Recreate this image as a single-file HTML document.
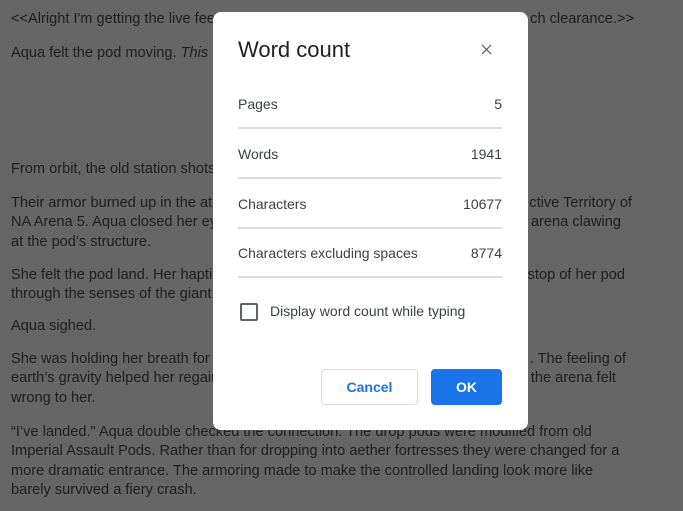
<!DOCTYPE html>
<html><head><style>
body{margin:0;width:683px;height:511px;background:#666;overflow:hidden;position:relative;font-family:"Liberation Sans",Arial,sans-serif;}
.t{position:absolute;left:11px;font-size:14.6px;color:#1f1f1f;white-space:nowrap;line-height:19.4px}
.r{position:absolute;font-size:14.6px;color:#1f1f1f;white-space:nowrap;line-height:19.4px;text-align:right}
.d{position:absolute;left:213px;top:12px;width:315px;height:418px;background:#fff;border-radius:8px;}
.d *{position:absolute;}
.title{left:25px;top:25px;font-size:22px;color:#202124;}
.lab{left:25px;font-size:14px;color:#3c4043}
.val{left:189px;width:100px;font-size:14px;color:#3c4043;text-align:right}
.ln{left:25px;width:264px;height:2px;background:#dadce0}
</style></head><body>
<div class="t" style="top:10px">&lt;&lt;Alright I'm getting the live feed from the arena now.</div>
<div class="t" style="top:44px">Aqua felt the pod moving. <i>This</i></div>
<div class="t" style="top:160px">From orbit, the old station shots</div>
<div class="t" style="top:194px">Their armor burned up in the atmosphere<br>NA Arena 5. Aqua closed her eyes and<br>at the pod’s structure.</div>
<div class="t" style="top:266px">She felt the pod land. Her haptic feedback<br>through the senses of the giant</div>
<div class="t" style="top:317px">Aqua sighed.</div>
<div class="t" style="top:350px">She was holding her breath for the entire<br>earth’s gravity helped her regain her<br>wrong to her.</div>
<div class="r" style="top:10px;right:49px">ch clearance.&gt;&gt;</div>
<div class="r" style="top:194px;right:51px">ctive Territory of</div>
<div class="r" style="top:213px;right:62px">arena clawing</div>
<div class="r" style="top:266px;right:58px">stop of her pod</div>
<div class="r" style="top:350px;right:57px">. The feeling of</div>
<div class="r" style="top:369px;right:67px">the arena felt</div>
<div class="t" style="top:423px">“I’ve landed." Aqua double checked the connection. The drop pods were modified from old<br>Imperial Assault Pods. Rather than for dropping into aether fortresses they were changed for a<br>more dramatic entrance. The armoring made to make the controlled landing look more like<br>barely survived a fiery crash.</div>
<div class="d">
<div class="title">Word count</div>
<svg style="left:268px;top:32px" width="11" height="11" viewBox="0 0 12 12"><path d="M1 1L11 11M11 1L1 11" stroke="#5f6368" stroke-width="1.4"/></svg>
<div class="lab" style="top:84px">Pages</div><div class="val" style="top:84px">5</div>
<div class="ln" style="top:115px"></div>
<div class="lab" style="top:134px">Words</div><div class="val" style="top:134px">1941</div>
<div class="ln" style="top:165px"></div>
<div class="lab" style="top:184px">Characters</div><div class="val" style="top:184px">10677</div>
<div class="ln" style="top:215px"></div>
<div class="lab" style="top:233px">Characters excluding spaces</div><div class="val" style="top:233px">8774</div>
<div class="ln" style="top:264px"></div>
<div style="left:27px;top:291px;width:14px;height:14px;border:2px solid #5f6368;border-radius:2px"></div>
<div class="lab" style="left:57px;top:291px">Display word count while typing</div>
<div style="left:108px;top:357px;width:95px;height:34px;border:1px solid #dadce0;border-radius:4px;color:#1a73e8;font-size:14px;text-align:center;line-height:34px;font-weight:bold">Cancel</div>
<div style="left:218px;top:357px;width:71px;height:36px;background:#1a73e8;border-radius:4px;color:#fff;font-size:14px;text-align:center;line-height:36px;font-weight:bold">OK</div>
</div>
</body></html>
